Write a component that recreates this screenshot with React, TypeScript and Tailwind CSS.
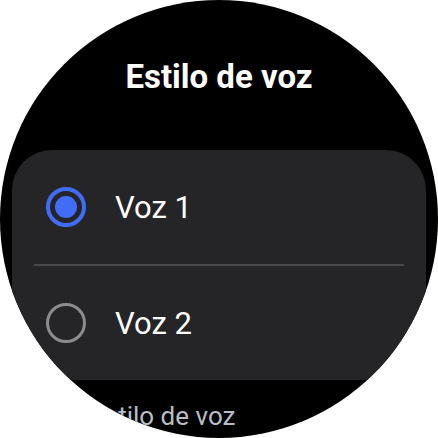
import React from 'react'

const options = [
  { label: 'Voz 1', selected: true },
  { label: 'Voz 2', selected: false },
]

const Radio = ({ selected }: { selected: boolean }) =>
  selected ? (
    <div className="w-[40px] h-[40px] rounded-full border-[4px] border-[#416cf6] flex items-center justify-center shrink-0">
      <div className="w-[22px] h-[22px] rounded-full bg-[#416cf6]" />
    </div>
  ) : (
    <div className="w-[40px] h-[40px] rounded-full border-[3px] border-[#8c8c8e] shrink-0" />
  )

export default function App() {
  return (
    <div className="w-[438px] h-[438px] bg-white">
      <div
        className="w-full h-full rounded-full bg-black overflow-hidden flex flex-col items-center"
        style={{ fontFamily: 'Roboto, "Noto Sans", sans-serif' }}
      >
        <h1 className="pt-[57px] text-[33px] leading-[40px] font-bold text-white">
          Estilo de voz
        </h1>

        <div className="mt-[53px] w-[414px] h-[230px] shrink-0 rounded-[40px] bg-[#252527] flex flex-col">
          {options.map((opt, i) => (
            <React.Fragment key={opt.label}>
              {i > 0 && <div className="mx-[22px] h-[2px] bg-[#48484b]" />}
              <div className="flex-1 flex items-center pl-[34px] gap-[29px]">
                <Radio selected={opt.selected} />
                <span className="text-[31px] leading-none text-white">{opt.label}</span>
              </div>
            </React.Fragment>
          ))}
        </div>

        <p className="self-start pl-[90px] mt-[21px] text-[26px] leading-[30px] text-[#b9bdc5]">
          Estilo de voz
        </p>
      </div>
    </div>
  )
}
